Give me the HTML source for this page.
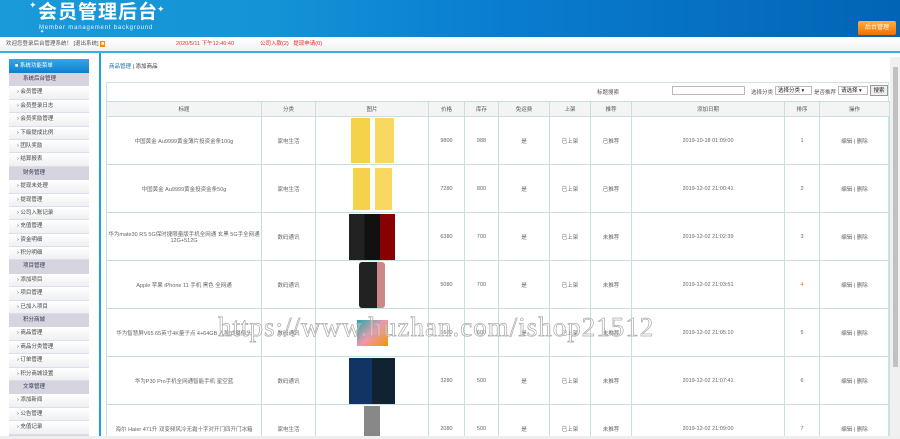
<!DOCTYPE html>
<html><head><meta charset="utf-8"><style>
*{margin:0;padding:0;box-sizing:border-box}
html,body{width:900px;height:439px;overflow:hidden}
body{background:#fff;font-family:"Liberation Sans","Noto Sans CJK SC",sans-serif;font-size:6px;color:#555;position:relative}
.hd{position:absolute;left:0;top:0;width:900px;height:37px;background:linear-gradient(90deg,#1a9ad8 0%,#1493d6 30%,#0a7dd0 55%,#0264b4 100%)}
.logo{position:absolute;left:38px;top:2px;color:#fff;font-size:19px;font-weight:bold;letter-spacing:1px;line-height:22px}
.sub{position:absolute;left:39px;top:25px;color:#e8f4ff;font-size:6px;letter-spacing:.8px;line-height:7px}
.star{position:absolute;color:#fff;font-size:9px}
.btn{position:absolute;left:858px;top:21px;width:38px;height:14px;background:linear-gradient(#ffb040,#f07000);border-radius:2px;color:#fff;font-size:6px;text-align:center;line-height:14px}
.bar{position:absolute;left:0;top:37px;width:900px;height:14px;background:linear-gradient(#fff,#f2f2f2);font-size:5.5px;line-height:14px}
.line{position:absolute;left:0;top:51px;width:900px;height:2px;background:#3ab0e0}
.sb{position:absolute;left:9px;top:59px;width:80px}
.sb .h{height:14px;background:linear-gradient(#33a7ea,#0f7fcc);color:#fff;line-height:14px;padding-left:6px;font-size:5.5px}
.sb div.c{height:13.4px;background:#d6d5df;color:#335;line-height:13.4px;padding-left:14px;font-size:5.5px}
.sb div.i{height:13.4px;background:linear-gradient(#fff,#eef0f2);border-bottom:1px solid #dde;line-height:13px;padding-left:8px;font-size:5.5px;color:#444}
.vl{position:absolute;left:99px;top:53px;width:2px;height:386px;background:#1fa3df}
.main{position:absolute;left:103px;top:57px;width:787px;height:382px;background:#fff}
.crumb{position:absolute;left:109px;top:62px;font-size:5.5px;color:#333}
.crumb b{color:#1a6fb0;font-weight:normal}
.box{position:absolute;left:106px;top:82px;width:783px;height:357px;border:1px solid #cde3e3;border-bottom:none}
.srch{position:absolute;left:0;top:0;width:781px;height:18px;font-size:5.5px}
table{position:absolute;left:106px;top:101px;border-collapse:collapse;table-layout:fixed}
td,th{border:1px solid #c6e0df;text-align:center;font-size:5.5px;color:#666;font-weight:normal;overflow:hidden}
th{height:15px;background:#f4f4f4;color:#555}
td{height:48px}
.sc{position:absolute;left:890px;top:57px;width:10px;height:382px;background:#f0f0f0}
.sc i{position:absolute;left:3px;top:10px;width:5px;height:300px;background:#c1c1c1}
.wm{position:absolute;left:218px;top:312px;font-family:"Liberation Serif",serif;font-size:27px;color:rgba(255,255,255,.3);-webkit-text-stroke:.7px #aaa;letter-spacing:1px}
.img{display:inline-block;vertical-align:middle}
</style></head><body>
<div class="hd"><div class="logo">会员管理后台</div><div class="sub">Member management background</div>
<span class="star" style="left:29px;top:0">✦</span><span class="star" style="left:157px;top:4px">✦</span><span class="star" style="left:40px;top:29px;font-size:5px">✦</span>
<div class="btn">后台管理</div></div>
<div class="bar"><span style="position:absolute;left:6px">欢迎您登录后台管理系统！ [退出系统] <span style="background:#f80;color:#fff;padding:0 1px">■</span></span>
<span style="position:absolute;left:176px;color:#e33">2020/5/11 下午12:46:40</span>
<span style="position:absolute;left:260px;color:#e22">公司入款(2) &nbsp; 提现申请(0)</span></div>
<div class="line"></div>
<div class="sb"><div class="h">■ 系统功能菜单</div>
<div class="c">系统后台管理</div><div class="i">› 会员管理</div><div class="i">› 会员登录日志</div><div class="i">› 会员奖励管理</div><div class="i">› 下级提成比例</div><div class="i">› 团队奖励</div><div class="i">› 结算报表</div>
<div class="c">财务管理</div><div class="i">› 提现未处理</div><div class="i">› 提现管理</div><div class="i">› 公司入账记录</div><div class="i">› 充值管理</div><div class="i">› 资金明细</div><div class="i">› 积分明细</div>
<div class="c">项目管理</div><div class="i">› 添加项目</div><div class="i">› 项目管理</div><div class="i">› 已加入项目</div>
<div class="c">积分商城</div><div class="i">› 商品管理</div><div class="i">› 商品分类管理</div><div class="i">› 订单管理</div><div class="i">› 积分商城设置</div>
<div class="c">文章管理</div><div class="i">› 添加新闻</div><div class="i">› 公告管理</div><div class="i">› 充值记录</div><div class="c"></div></div>
<div class="vl"></div>
<div class="main"></div>
<div class="crumb"><b>商品管理</b> | 添加商品</div>
<div class="box"><div class="srch">
<span style="position:absolute;left:490px;top:5px">标题搜索</span><span style="position:absolute;left:565px;top:3px;width:73px;height:9px;border:1px solid #bbb"></span>
<span style="position:absolute;left:644px;top:5px">选择分类</span><span style="position:absolute;left:668px;top:3px;width:37px;height:9px;border:1px solid #bbb;padding-left:2px;line-height:8px;color:#222">选择分类 ▾</span>
<span style="position:absolute;left:707px;top:5px">是否推荐</span><span style="position:absolute;left:731px;top:3px;width:30px;height:9px;border:1px solid #bbb;padding-left:2px;line-height:8px;color:#222">请选择 ▾</span>
<span style="position:absolute;left:763px;top:2px;width:18px;height:11px;border:1px solid #999;background:#eee;text-align:center;line-height:10px;color:#222">搜索</span>
</div></div>
<table>
<colgroup><col width="155"><col width="54"><col width="113"><col width="36"><col width="34"><col width="51"><col width="41"><col width="41"><col width="153"><col width="35"><col width="70"></colgroup>
<tr><th>标题</th><th>分类</th><th>图片</th><th>价格</th><th>库存</th><th>免运费</th><th>上架</th><th>推荐</th><th>添加日期</th><th>排序</th><th>操作</th></tr>
<tr><td>中国黄金 Au9999黄金薄片投资金条100g</td><td>家电生活</td><td><span class="img" style="width:19px;height:45px;background:#f6d24a;margin-right:5px"></span><span class="img" style="width:19px;height:45px;background:#f8d860"></span></td><td>9800</td><td>988</td><td>是</td><td>已上架</td><td>已推荐</td><td>2019-10-18 01:09:00</td><td>1</td><td>编辑 | 删除</td></tr>
<tr><td>中国黄金 Au9999黄金投资金条50g</td><td>家电生活</td><td><span class="img" style="width:17px;height:42px;background:#f6d24a;margin-right:5px"></span><span class="img" style="width:17px;height:42px;background:#f8d860"></span></td><td>7280</td><td>800</td><td>是</td><td>已上架</td><td>已推荐</td><td>2019-12-02 21:00:41</td><td>2</td><td>编辑 | 删除</td></tr>
<tr><td>华为mate30 RS 5G保时捷限量版手机全网通 玄黑 5G手全网通12G+512G</td><td>数码通讯</td><td><span class="img" style="width:46px;height:46px;background:linear-gradient(90deg,#222 50%,#111 50%);border-right:15px solid #800"></span></td><td>6380</td><td>700</td><td>是</td><td>已上架</td><td>未推荐</td><td>2019-12-02 21:02:39</td><td>3</td><td>编辑 | 删除</td></tr>
<tr><td>Apple 苹果 iPhone 11 手机 黑色 全网通</td><td>数码通讯</td><td><span class="img" style="width:26px;height:46px;background:#222;border-radius:3px;border-right:8px solid #c88"></span></td><td>5080</td><td>700</td><td>是</td><td>已上架</td><td>未推荐</td><td>2019-12-02 21:03:51</td><td style="color:#e70">4</td><td>编辑 | 删除</td></tr>
<tr><td>华为智慧屏V65 65英寸4K量子点 4+64GB 人脸式摄像头</td><td>数码通讯</td><td><span class="img" style="width:31px;height:26px;background:linear-gradient(135deg,#2aa 0%,#e9a 50%,#e90 100%)"></span></td><td>1680</td><td>600</td><td>是</td><td>已上架</td><td>未推荐</td><td>2019-12-02 21:05:10</td><td>5</td><td>编辑 | 删除</td></tr>
<tr><td>华为P30 Pro手机全网通智能手机 星空蓝</td><td>数码通讯</td><td><span class="img" style="width:46px;height:46px;background:linear-gradient(90deg,#136 50%,#123 50%)"></span></td><td>3280</td><td>500</td><td>是</td><td>已上架</td><td>未推荐</td><td>2019-12-02 21:07:41</td><td>6</td><td>编辑 | 删除</td></tr>
<tr><td>海尔 Haier 471升 双变频风冷无霜十字对开门四开门冰箱</td><td>家电生活</td><td><span class="img" style="width:16px;height:46px;background:#888"></span></td><td>2080</td><td>500</td><td>是</td><td>已上架</td><td>未推荐</td><td>2019-12-02 21:09:00</td><td>7</td><td>编辑 | 删除</td></tr>
</table>
<div class="sc"><i></i></div>
<div style="position:absolute;left:0;top:436px;width:900px;height:3px;background:#eee"></div>
<div class="wm">https://www.huzhan.com/ishop21512</div>
</body></html>
